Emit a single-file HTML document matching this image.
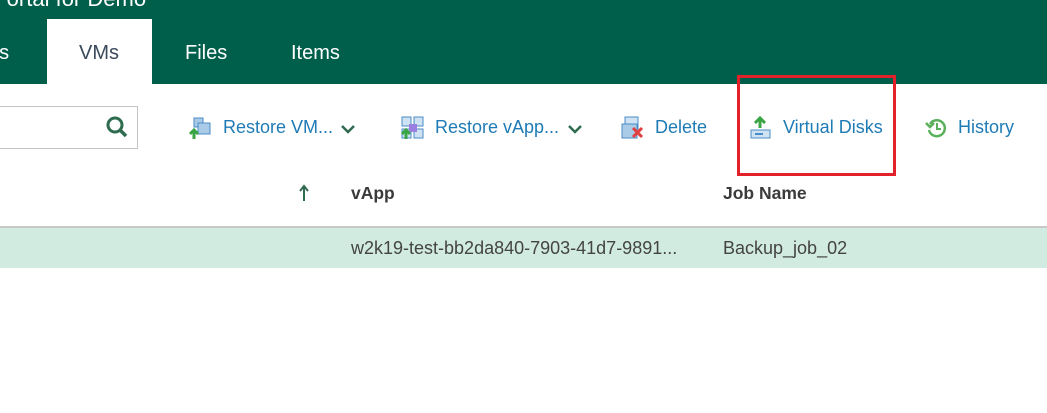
<!DOCTYPE html>
<html><head><style>
body{margin:0;width:1047px;height:413px;overflow:hidden;background:#fff;font-family:"Liberation Sans",sans-serif;position:relative}
.a{position:absolute;white-space:nowrap}
.tb{font-size:18px;color:#1f7bb5;top:117px}
</style></head><body>
<div class="a" style="left:0;top:0;width:1047px;height:84px;background:#005f4b"></div>
<div class="a" style="left:-8px;top:-14px;font-size:22px;color:#fff">Portal for Demo</div>
<div class="a" style="left:47px;top:19px;width:105px;height:65px;background:#fff"></div>
<div class="a" style="left:-12px;top:42px;font-size:20px;color:#fff">bs</div>
<div class="a" style="left:79px;top:42px;font-size:20px;color:#3a4a5a">VMs</div>
<div class="a" style="left:185px;top:42px;font-size:20px;color:#fff">Files</div>
<div class="a" style="left:291px;top:42px;font-size:20px;color:#fff">Items</div>
<div class="a" style="left:-2px;top:106px;width:138px;height:41px;border:1px solid #c4c4c4"></div>
<svg class="a" style="left:105px;top:115px" width="24" height="24"><circle cx="10" cy="10" r="7" fill="none" stroke="#2e6b4f" stroke-width="3"/><path d="M15 15l6 6" stroke="#2e6b4f" stroke-width="3.5"/></svg>
<svg class="a" style="left:189px;top:117px" width="24" height="22"><rect x="5" y="1" width="9" height="9" fill="#a9cbe8" stroke="#4a8cc6"/><rect x="9" y="6" width="12" height="11" fill="#a9cbe8" stroke="#4a8cc6"/><path d="M5 22v-7M1 17l4-4 4 4" stroke="#3aa544" stroke-width="3" fill="none"/></svg>
<div class="a tb" style="left:223px">Restore VM...</div>
<svg class="a" style="left:341px;top:124px" width="14" height="10"><path d="M1 2l6 6 6-6" stroke="#2e6b4f" stroke-width="2.5" fill="none"/></svg>
<svg class="a" style="left:401px;top:116px" width="24" height="24"><rect x="1" y="1" width="9" height="9" fill="#cfe2f3" stroke="#4a8cc6"/><rect x="13" y="1" width="9" height="9" fill="#cfe2f3" stroke="#4a8cc6"/><rect x="1" y="13" width="9" height="9" fill="#cfe2f3" stroke="#4a8cc6"/><rect x="13" y="13" width="9" height="9" fill="#cfe2f3" stroke="#4a8cc6"/><rect x="8" y="8" width="8" height="8" fill="#9b7fe0"/><path d="M5 23v-7M1 18l4-4 4 4" stroke="#3aa544" stroke-width="3" fill="none"/></svg>
<div class="a tb" style="left:435px">Restore vApp...</div>
<svg class="a" style="left:568px;top:124px" width="14" height="10"><path d="M1 2l6 6 6-6" stroke="#2e6b4f" stroke-width="2.5" fill="none"/></svg>
<svg class="a" style="left:621px;top:116px" width="24" height="24"><rect x="4" y="1" width="13" height="12" fill="#cfe2f3" stroke="#4a8cc6"/><rect x="1" y="8" width="15" height="14" fill="#a9cbe8" stroke="#4a8cc6"/><path d="M12 12l9 9M21 12l-9 9" stroke="#e04040" stroke-width="3"/></svg>
<div class="a tb" style="left:655px">Delete</div>
<svg class="a" style="left:750px;top:116px" width="24" height="24"><path d="M10 12V3M5 7l5-5 5 5" stroke="#3aa544" stroke-width="3" fill="none"/><rect x="1" y="14" width="19" height="8" fill="#cfe2f3" stroke="#4a8cc6"/><rect x="5" y="17" width="8" height="2" fill="#4a8cc6"/></svg>
<div class="a tb" style="left:783px">Virtual Disks</div>
<div class="a" style="left:737px;top:75px;width:153px;height:95px;border:3px solid #e3212b"></div>
<svg class="a" style="left:925px;top:116px" width="24" height="24"><path d="M5 8a8 8 0 1 1 -1 6" stroke="#5bb05b" stroke-width="2.5" fill="none"/><path d="M1 7l4 4 4-4" stroke="#5bb05b" stroke-width="2.5" fill="none"/><path d="M12 7v6h4" stroke="#5bb05b" stroke-width="2" fill="none"/></svg>
<div class="a tb" style="left:958px">History</div>
<svg class="a" style="left:298px;top:184px" width="12" height="18"><path d="M6 17V3M2 7l4-5 4 5" stroke="#2e6b4f" stroke-width="2" fill="none"/></svg>
<div class="a" style="left:351px;top:183px;font-size:17.5px;font-weight:bold;color:#3a3a3a">vApp</div>
<div class="a" style="left:723px;top:183px;font-size:17.5px;font-weight:bold;color:#3a3a3a">Job Name</div>
<div class="a" style="left:0;top:226px;width:1047px;height:2px;background:#c8c8c8"></div>
<div class="a" style="left:0;top:228px;width:1047px;height:40px;background:#d1ebe0"></div>
<div class="a" style="left:351px;top:238px;font-size:18px;color:#444">w2k19-test-bb2da840-7903-41d7-9891...</div>
<div class="a" style="left:723px;top:238px;font-size:18px;color:#444">Backup_job_02</div>
</body></html>
